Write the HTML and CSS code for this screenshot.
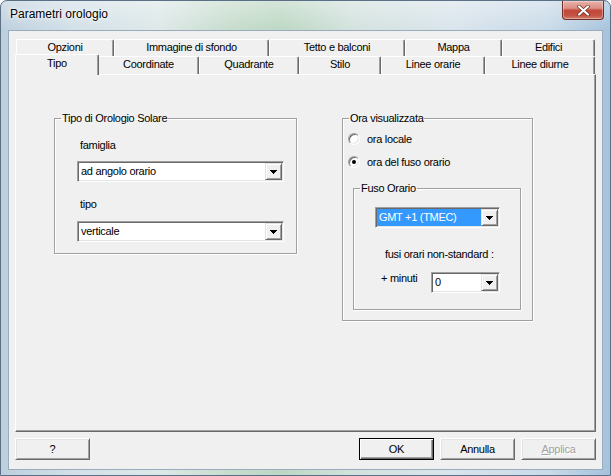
FILE: index.html
```html
<!DOCTYPE html>
<html>
<head>
<meta charset="utf-8">
<title>Parametri orologio</title>
<link rel="stylesheet" href="styles.css">
</head>
<body>
<div class="window">
  <div class="titlebar">
    <span class="title">Parametri orologio</span>
    <div class="close">
      <svg width="13" height="11" viewBox="0 0 13 11">
        <path d="M2 1.5 L11 9.5 M11 1.5 L2 9.5" stroke="#6b2a22" stroke-width="3.6" stroke-linecap="round" fill="none"/>
        <path d="M2 1.5 L11 9.5 M11 1.5 L2 9.5" stroke="#ffffff" stroke-width="2.2" stroke-linecap="round" fill="none"/>
      </svg>
    </div>
  </div>
  <div class="client">
    <div class="tabctl">
      <div class="tabrow back">
        <div class="tab w-opzioni">Opzioni</div>
        <div class="tab w-immagine">Immagine di sfondo</div>
        <div class="tab w-tetto">Tetto e balconi</div>
        <div class="tab w-mappa">Mappa</div>
        <div class="tab w-edifici">Edifici</div>
      </div>
      <div class="tabrow front">
        <div class="tab sel w-tipo">Tipo</div>
        <div class="tab w-coord">Coordinate</div>
        <div class="tab w-quad">Quadrante</div>
        <div class="tab w-stilo">Stilo</div>
        <div class="tab w-orarie">Linee orarie</div>
        <div class="tab w-diurne">Linee diurne</div>
      </div>
      <div class="panel">
        <fieldset class="group g1">
          <legend>Tipo di Orologio Solare</legend>
          <div class="lbl first">famiglia</div>
          <div class="combo wide">
            <span class="val">ad angolo orario</span>
            <span class="drop"><svg width="7" height="4" viewBox="0 0 7 4" shape-rendering="crispEdges"><path d="M0 0h7v1H0zM1 1h5v1H1zM2 2h3v1H2zM3 3h1v1H3z" fill="#000"/></svg></span>
          </div>
          <div class="lbl second">tipo</div>
          <div class="combo wide second-combo">
            <span class="val">verticale</span>
            <span class="drop"><svg width="7" height="4" viewBox="0 0 7 4" shape-rendering="crispEdges"><path d="M0 0h7v1H0zM1 1h5v1H1zM2 2h3v1H2zM3 3h1v1H3z" fill="#000"/></svg></span>
          </div>
        </fieldset>
        <fieldset class="group g2">
          <legend>Ora visualizzata</legend>
          <div class="radio r1"><span class="rb"></span><span>ora locale</span></div>
          <div class="radio r2"><span class="rb on"></span><span>ora del fuso orario</span></div>
          <fieldset class="group g3">
            <legend>Fuso Orario</legend>
            <div class="combo gmt">
              <span class="val selected">GMT +1 (TMEC)</span>
              <span class="drop"><svg width="7" height="4" viewBox="0 0 7 4" shape-rendering="crispEdges"><path d="M0 0h7v1H0zM1 1h5v1H1zM2 2h3v1H2zM3 3h1v1H3z" fill="#000"/></svg></span>
            </div>
            <div class="note">fusi orari non-standard :</div>
            <div class="minrow">
              <span class="minlbl">+ minuti</span>
              <div class="combo small">
                <span class="val">0</span>
                <span class="drop"><svg width="7" height="4" viewBox="0 0 7 4" shape-rendering="crispEdges"><path d="M0 0h7v1H0zM1 1h5v1H1zM2 2h3v1H2zM3 3h1v1H3z" fill="#000"/></svg></span>
              </div>
            </div>
          </fieldset>
        </fieldset>
      </div>
    </div>
    <div class="btnrow">
      <div class="btn">?</div>
      <div class="btn ok">OK</div>
      <div class="btn">Annulla</div>
      <div class="btn disabled"><u>A</u>pplica</div>
    </div>
  </div>
</div>
</body>
</html>
```
FILE: styles.css
```css
* { box-sizing: border-box; }
html, body { margin: 0; padding: 0; }
body {
  width: 611px;
  height: 476px;
  overflow: hidden;
  background: #ffffff;
  font-family: "Liberation Sans", Arial, sans-serif;
  font-size: 11px;
  letter-spacing: -0.3px;
  color: #000;
}
.window {
  width: 611px;
  height: 476px;
  border: 1px solid #5b7086;
  border-radius: 7px 7px 0 0;
  background:
    linear-gradient(180deg, rgba(255,255,255,0.35) 0px, rgba(255,255,255,0) 30px),
    linear-gradient(90deg, #bccfdd 0%, #d3e0e8 12%, #dde8e8 26%, #c6dccc 38%, #bcd7c3 46%, #d3e2de 58%, #d9e4ec 74%, #c9dae8 90%, #a5c2dc 100%);
  display: flex;
  flex-direction: column;
  overflow: hidden;
}
.titlebar {
  height: 29px;
  display: flex;
  align-items: flex-start;
  flex-shrink: 0;
}
.title {
  font-size: 12px;
  letter-spacing: 0;
  line-height: 15px;
  margin: 6px 0 0 9px;
  color: #000;
  text-shadow: 0 0 6px #fff, 0 0 3px #fff;
}
.close {
  margin-left: auto;
  margin-right: 6px;
  width: 42px;
  height: 19px;
  border: 1px solid #6d2f28;
  border-top: none;
  border-radius: 0 0 4px 4px;
  background: linear-gradient(180deg, #e9b2a8 0%, #dc8f83 40%, #c4473a 52%, #c25343 80%, #d0806c 100%);
  box-shadow: inset 0 0 0 1px rgba(255,255,255,0.35);
  display: flex;
  align-items: center;
  justify-content: center;
}
.client {
  margin: 0 7px;
  height: 440px;
  border: 1px solid #9aabbb;
  background: #f0f0f0;
  padding: 8px 6px 0 6px;
  display: flex;
  flex-direction: column;
  flex-shrink: 0;
}
.tabctl { width: 581px; }
.tabrow {
  display: flex;
  padding: 0 1px;
}
.tabrow.back { height: 17px; }
.tabrow.front { height: 18px; }
.tab {
  flex: 0 0 auto;
  text-align: center;
  white-space: nowrap;
  background: #f0f0f0;
  border-top: 1px solid #fff;
  border-left: 1px solid #fff;
  border-right: 1px solid #696969;
  border-radius: 2px 2px 0 0;
  box-shadow: inset -1px 0 #a0a0a0;
}
.w-opzioni { width: 98px; }
.w-immagine { width: 155px; }
.w-tetto { width: 136px; }
.w-mappa { width: 97px; }
.w-edifici { width: 93px; }
.w-tipo { width: 84px; }
.w-coord { width: 101px; }
.w-quad { width: 100px; }
.w-stilo { width: 82px; }
.w-orarie { width: 104px; }
.w-diurne { width: 110px; }
.back .tab { line-height: 15px; }
.front .tab { line-height: 14px; }
.front .tab.sel {
  margin: -2px -1px 0 -1px;
  height: 21px;
  line-height: 16px;
  position: relative;
  z-index: 1;
}
.panel {
  height: 358px;
  border: 1px solid;
  border-color: #fff #696969 #696969 #fff;
  box-shadow: inset -1px -1px #a0a0a0;
  display: flex;
  align-items: flex-start;
  padding: 37px 0 0 38px;
}
.group {
  margin: 0;
  padding: 0;
  min-width: 0;
  border: 1px solid #a0a0a0;
  box-shadow: inset 1px 1px #fff, 1px 1px #fff;
}
.group legend {
  padding: 0 1px;
  margin-left: 6px;
  line-height: 13px;
}
.g1 {
  width: 243px;
  padding-bottom: 11px;
}
.lbl {
  line-height: 13px;
  margin-left: 25px;
}
.lbl.first { margin-top: 14px; }
.lbl.second { margin-top: 16px; }
.combo {
  height: 21px;
  border: 1px solid;
  border-color: #a0a0a0 #fff #fff #a0a0a0;
  box-shadow: inset 1px 1px #696969, inset -1px -1px #e3e3e3;
  background: #fff;
  padding: 1px;
  display: flex;
}
.combo .val {
  flex: 1 1 auto;
  line-height: 17px;
  padding-left: 2px;
  white-space: nowrap;
  overflow: hidden;
}
.combo .val.selected {
  background: #3399ff;
  color: #fff;
}
.combo .drop {
  width: 17px;
  height: 17px;
  flex-shrink: 0;
  background: #f0f0f0;
  border: 1px solid;
  border-color: #e3e3e3 #696969 #696969 #e3e3e3;
  box-shadow: inset 1px 1px #fff, inset -1px -1px #a0a0a0;
  display: flex;
  align-items: center;
  justify-content: center;
}
.combo.wide {
  width: 207px;
  margin: 9px 0 0 22px;
}
.combo.wide.second-combo { margin-top: 10px; }
.g2 {
  width: 191px;
  margin-left: 45px;
  padding-bottom: 10px;
}
.radio {
  display: flex;
  align-items: center;
  height: 13px;
  margin-left: 5px;
}
.radio.r1 { margin-top: 7px; }
.radio.r2 { margin-top: 10px; }
.rb {
  width: 12px;
  height: 12px;
  border-radius: 50%;
  border: 1px solid;
  border-color: #a0a0a0 #fff #fff #a0a0a0;
  box-shadow: inset 1px 1px #696969, inset -1px -1px #e3e3e3;
  background: #fff;
  margin-right: 7px;
  display: flex;
  align-items: center;
  justify-content: center;
}
.rb.on::after {
  content: "";
  width: 4px;
  height: 4px;
  border-radius: 50%;
  background: #000;
}
.g3 {
  width: 168px;
  margin: 14px 0 0 10px;
  padding: 0 20px 16px 0;
}
.combo.gmt {
  width: 125px;
  margin: 12px 0 0 21px;
}
.note {
  line-height: 13px;
  margin: 20px 0 0 31px;
  white-space: nowrap;
}
.minrow {
  display: flex;
  align-items: flex-start;
  margin-top: 11px;
  padding-left: 27px;
}
.minlbl { line-height: 13px; }
.combo.small {
  width: 69px;
  margin-left: auto;
}
.btnrow {
  display: flex;
  gap: 6px;
  margin-top: 6px;
}
.btn {
  width: 75px;
  height: 22px;
  line-height: 20px;
  text-align: center;
  background: #f0f0f0;
  border: 1px solid;
  border-color: #fff #696969 #696969 #fff;
  box-shadow: inset 1px 1px #e3e3e3, inset -1px -1px #a0a0a0;
}
.btn.ok {
  margin-left: auto;
  border: 1px solid #000;
  box-shadow: inset 1px 1px #fff, inset -1px -1px #696969, inset -2px -2px #a0a0a0;
}
.btn.disabled {
  color: #a0a0a0;
  text-shadow: 1px 1px #fff;
}
```
